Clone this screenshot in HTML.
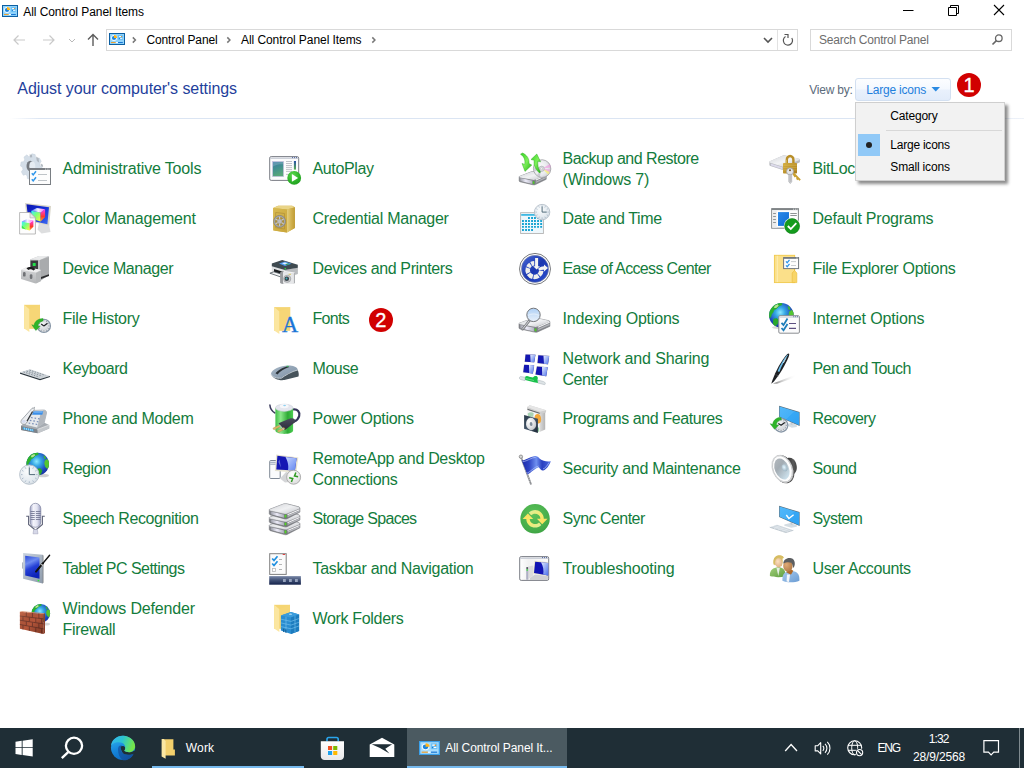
<!DOCTYPE html>
<html><head><meta charset="utf-8"><title>All Control Panel Items</title>
<style>
html,body{margin:0;padding:0}
body{width:1024px;height:768px;overflow:hidden;background:#fff;position:relative;font-family:"Liberation Sans",sans-serif;}
.t{position:absolute;white-space:nowrap;}
.abs{position:absolute}
.it{position:absolute;width:245px;height:50px}
.it .ic{position:absolute;left:2px;top:10px;width:32px;height:32px}
.it .ic svg{display:block;width:32px;height:32px;overflow:visible}
.it .lb{position:absolute;left:45.5px;white-space:nowrap;font-size:16px;line-height:21px;color:#137c3c}
svg{display:block}
</style></head>
<body>
<!-- title bar -->
<div class="abs" style="left:2px;top:5px;width:16px;height:12px"><svg width="16" height="12" viewBox="0 0 16 12"><rect x="0.500" y="0.500" width="15" height="11" fill="#8fd3fb" stroke="#0d5fa2" stroke-width="1"/><rect x="9" y="2" width="5" height="5" fill="#6cc0f5"/><circle cx="5" cy="5" r="2.900" fill="#f4fbff"/><circle cx="5" cy="5" r="2.100" fill="#1a84de"/><path d="M5 5V1.900A3.100 3.100 0 0 1 8.100 5z" fill="#ffb41a"/><rect x="10" y="3.100" width="2.500" height=".9" rx=".4" fill="#fff"/><circle cx="12.500" cy="3.550" r=".65" fill="#f5901e"/><circle cx="10.400" cy="5.600" r=".6" fill="#1a78d0"/><rect x="11" y="5.150" width="2.400" height=".9" rx=".4" fill="#fff"/><rect x="2" y="9.100" width="4.800" height=".95" fill="#f59a1a"/><rect x="6.800" y="9.100" width="2.200" height=".95" fill="#fff"/><rect x="9" y="9.100" width="4.800" height=".95" fill="#0f6ed0"/></svg></div>
<div class="t" style="left:23.2px;top:4.94px;font-size:12px;line-height:15px;letter-spacing:-0.055px;color:#000;">All Control Panel Items</div>
<svg class="abs" style="left:896px;top:0" width="128" height="22" viewBox="0 0 128 22">
 <path d="M7 10.5h10.5" stroke="#000" stroke-width="1" fill="none"/>
 <path d="M52.5 7.5h8v8h-8z M54.5 7.5v-2h8v8h-2" stroke="#000" stroke-width="1" fill="none"/>
 <path d="M98 5l10 10M108 5l-10 10" stroke="#000" stroke-width="1.1" fill="none"/>
</svg>
<!-- nav bar -->
<svg class="abs" style="left:0;top:28px" width="106" height="24" viewBox="0 0 106 24">
 <g fill="none" stroke="#c9c9c9" stroke-width="1.2">
  <path d="M25 12H14M18.5 7.5L14 12l4.500 4.500"/>
  <path d="M43 12h11M49.500 7.500L54 12l-4.500 4.500"/>
  <path d="M69 11l3 3 3-3" stroke="#b9b9b9" stroke-width="1"/>
 </g>
 <path d="M93 18V6.500M88 11.500l5-5 5 5" fill="none" stroke="#5c5c5c" stroke-width="1.4"/>
</svg>
<div class="abs" style="left:106px;top:29px;width:690px;height:20px;border:1px solid #d9d9d9;background:#fff"></div>
<div class="abs" style="left:777px;top:30px;width:1px;height:20px;background:#e2e2e2"></div>
<div class="abs" style="left:109px;top:33px;width:16px;height:12px"><svg width="16" height="12" viewBox="0 0 16 12"><rect x="0.500" y="0.500" width="15" height="11" fill="#8fd3fb" stroke="#0d5fa2" stroke-width="1"/><rect x="9" y="2" width="5" height="5" fill="#6cc0f5"/><circle cx="5" cy="5" r="2.900" fill="#f4fbff"/><circle cx="5" cy="5" r="2.100" fill="#1a84de"/><path d="M5 5V1.900A3.100 3.100 0 0 1 8.100 5z" fill="#ffb41a"/><rect x="10" y="3.100" width="2.500" height=".9" rx=".4" fill="#fff"/><circle cx="12.500" cy="3.550" r=".65" fill="#f5901e"/><circle cx="10.400" cy="5.600" r=".6" fill="#1a78d0"/><rect x="11" y="5.150" width="2.400" height=".9" rx=".4" fill="#fff"/><rect x="2" y="9.100" width="4.800" height=".95" fill="#f59a1a"/><rect x="6.800" y="9.100" width="2.200" height=".95" fill="#fff"/><rect x="9" y="9.100" width="4.800" height=".95" fill="#0f6ed0"/></svg></div>
<svg class="abs" style="left:130px;top:35px" width="250" height="10" viewBox="0 0 250 10">
 <g fill="none" stroke="#777" stroke-width="1.500"><path d="M2.800 2.400l2.600 2.600-2.600 2.600"/><path d="M97.300 2.400l2.600 2.600-2.600 2.600"/><path d="M242.300 2.400l2.600 2.600-2.600 2.600"/></g>
</svg>
<div class="t" style="left:146.5px;top:33.34px;font-size:12px;line-height:15px;letter-spacing:-0.132px;color:#000;">Control Panel</div>
<div class="t" style="left:241.0px;top:33.34px;font-size:12px;line-height:15px;letter-spacing:-0.068px;color:#000;">All Control Panel Items</div>
<svg class="abs" style="left:760px;top:32px" width="36" height="16" viewBox="0 0 36 16">
 <path d="M4 6l4 4 4-4" fill="none" stroke="#555" stroke-width="1.6"/>
 <path d="M25.500 4.600A4.600 4.600 0 1 0 31.800 6" fill="none" stroke="#555" stroke-width="1.2"/>
 <path d="M24.500 2.500h3.500v3.500" fill="none" stroke="#555" stroke-width="1.2"/>
</svg>
<div class="abs" style="left:810px;top:29px;width:200px;height:20px;border:1px solid #d9d9d9;background:#fff"></div>
<div class="t" style="left:819.0px;top:33.34px;font-size:12px;line-height:15px;letter-spacing:-0.224px;color:#6d6d6d;">Search Control Panel</div>
<svg class="abs" style="left:990px;top:33px" width="16" height="14" viewBox="0 0 16 14">
 <circle cx="8.800" cy="5.200" r="3.300" fill="none" stroke="#666" stroke-width="1.3"/><path d="M6.400 7.600L2.500 11.500" stroke="#666" stroke-width="1.600"/>
</svg>
<!-- heading -->
<div class="t" style="left:17.3px;top:79.26px;font-size:16px;line-height:20px;letter-spacing:-0.069px;color:#1f3f9c;">Adjust your computer's settings</div>
<div class="t" style="left:809.3px;top:83.09px;font-size:12px;line-height:15px;letter-spacing:-0.243px;color:#5b6b7b;">View by:</div>
<div class="abs" style="left:855px;top:78px;width:94px;height:20.500px;border:1px solid #d3e0f1;border-radius:3px;background:linear-gradient(#fcfdff 0%,#f4f8fe 48%,#e9f1fc 52%,#e2ecfa 100%)"></div>
<div class="t" style="left:866.3px;top:83.09px;font-size:12px;line-height:15px;letter-spacing:-0.213px;color:#1e7fdc;">Large icons</div>
<svg class="abs" style="left:931px;top:86px" width="10" height="6" viewBox="0 0 10 6"><path d="M0.500 1h8.500L4.750 5.500z" fill="#2a8ae2"/></svg>
<div class="abs" style="left:10px;top:118px;width:1014px;height:1px;background:linear-gradient(90deg,#fff 0,#dbe5f3 3%,#dbe5f3 92%,#eef2f9 100%)"></div>
<!-- red badges -->
<div class="abs badge" style="left:957px;top:72.800px;">1</div>
<div class="abs badge" style="left:368.800px;top:307.800px;">2</div>
<style>.badge{width:24px;height:24px;border-radius:50%;background:#d10000;color:#fff;font-size:20px;line-height:24.500px;text-align:center;-webkit-text-stroke:.35px #fff}</style>
<!-- items -->
<div class="it" style="left:17px;top:143px"><div class="ic"><svg viewBox="0 0 32 32"><g transform="translate(12.3 13.6) scale(0.86 1.02) rotate(12)"><path d="M9.79 -2.85L12.44 -1.97L12.44 1.97L9.79 2.85L8.94 4.91L10.19 7.41L7.41 10.19L4.91 8.94L2.85 9.79L1.97 12.44L-1.97 12.44L-2.85 9.79L-4.91 8.94L-7.41 10.19L-10.19 7.41L-8.94 4.91L-9.79 2.85L-12.44 1.97L-12.44 -1.97L-9.79 -2.85L-8.94 -4.91L-10.19 -7.41L-7.41 -10.19L-4.91 -8.94L-2.85 -9.79L-1.97 -12.44L1.97 -12.44L2.85 -9.79L4.91 -8.94L7.41 -10.19L10.19 -7.41L8.94 -4.91z" fill="#d4dee8" stroke="#c3cfdb" stroke-width=".5" stroke-linejoin="round"/></g><path d="M10.500 1.400l2.400.3.300 2.500-2 .4zM17 3.500l2.600 1.500.5 4.400-2.200-1.500zM21.700 10.500l2.200 1.200.2 2.200-2.200-.6z" fill="#a9b1ba" opacity=".85"/><ellipse cx="11.300" cy="13" rx="3.800" ry="5.300" fill="#74797f"/><ellipse cx="13.300" cy="13.200" rx="3" ry="4.800" fill="#e6ecf2"/><rect x="10.500" y="15.500" width="21" height="16" fill="#fdfdfd" stroke="#797e83" stroke-width="1"/><rect x="10.500" y="15.300" width="21" height="1.700" fill="#797e83"/><path d="M26 16.100h.9M27.800 16.100h.9M29.500 16.100h.9" stroke="#fff" stroke-width=".8"/><path d="M12.800 20.300l1.400 1.600 2.800-3.600M12.800 26.300l1.400 1.600 2.800-3.600" stroke="#2f96ea" stroke-width="1.500" fill="none"/><path d="M19 21.500h9M19 27.500h9" stroke="#bfc4c8" stroke-width="1"/></svg></div><div class="lb" style="top:15.0px"><span style="letter-spacing:-0.159px">Administrative Tools</span></div></div>
<div class="it" style="left:17px;top:193px"><div class="ic"><svg viewBox="0 0 32 32"><defs><linearGradient id="cmS" x1="0" y1="0" x2="1" y2="1"><stop offset="0" stop-color="#0c16b0"/><stop offset=".5" stop-color="#1430d8"/><stop offset="1" stop-color="#3f6cf0"/></linearGradient><linearGradient id="cm1a" x1="0" y1="0" x2="1" y2="1"><stop offset="0" stop-color="#35f0ff"/><stop offset=".45" stop-color="#7dff7a"/><stop offset="1" stop-color="#fff83a"/></linearGradient><linearGradient id="cm1b" x1="0" y1="0" x2="0" y2="1"><stop offset="0" stop-color="#ff3cf0"/><stop offset=".6" stop-color="#ff3a2a"/><stop offset="1" stop-color="#ffb02a"/></linearGradient><linearGradient id="cm1t" x1="0" y1="0" x2="1" y2="0"><stop offset="0" stop-color="#4a6cff"/><stop offset=".5" stop-color="#f4f6ff"/><stop offset="1" stop-color="#ff60f0"/></linearGradient><linearGradient id="cm2a" x1="0" y1="0" x2="1" y2="1"><stop offset="0" stop-color="#35f0ff"/><stop offset=".45" stop-color="#7dff7a"/><stop offset="1" stop-color="#fff83a"/></linearGradient><linearGradient id="cm2b" x1="0" y1="0" x2="0" y2="1"><stop offset="0" stop-color="#ff3cf0"/><stop offset=".6" stop-color="#ff3a2a"/><stop offset="1" stop-color="#ffb02a"/></linearGradient><linearGradient id="cm2t" x1="0" y1="0" x2="1" y2="0"><stop offset="0" stop-color="#4a6cff"/><stop offset=".5" stop-color="#f4f6ff"/><stop offset="1" stop-color="#ff60f0"/></linearGradient></defs><path d="M20 20l10 1.500 1.500 7.500-9 1.500-4-4z" fill="#d9dadc" opacity=".9"/><path d="M6 0l26 3-1.800 19.500L8 18z" fill="#d8d5c8"/><path d="M7.500 1.300l22.500 2.900-1.600 17L9.400 17z" fill="url(#cmS)"/><path d="M12.30 7.71L21.61 9.43L21.61 18.40L12.30 15.64z" fill="url(#cm1a)"/><path d="M21.61 9.43L26.10 6.32L26.10 13.91L21.61 18.40z" fill="url(#cm1b)"/><path d="M12.30 7.71L17.82 4.95L26.10 6.32L21.61 9.43z" fill="url(#cm1t)"/><path d="M12.30 12.19L12.30 15.64L17.13 17.02z" fill="#25e23a" opacity=".8"/><path d="M0.600 9.500h10.400l5.400 5.400V31H0.600z" fill="#fdfdfd" stroke="#a9a9a9" stroke-width=".8"/><path d="M11 9.500v5.400h5.400z" fill="#e8e8e8" stroke="#a9a9a9" stroke-width=".6"/><path d="M2.80 18.61L10.63 20.06L10.63 27.60L2.80 25.28z" fill="url(#cm2a)"/><path d="M10.63 20.06L14.40 17.45L14.40 23.83L10.63 27.60z" fill="url(#cm2b)"/><path d="M2.80 18.61L7.44 16.29L14.40 17.45L10.63 20.06z" fill="url(#cm2t)"/><path d="M2.80 22.38L2.80 25.28L6.86 26.44z" fill="#25e23a" opacity=".8"/></svg></div><div class="lb" style="top:15.0px"><span style="letter-spacing:-0.174px">Color Management</span></div></div>
<div class="it" style="left:17px;top:243px"><div class="ic"><svg viewBox="0 0 32 32"><defs><linearGradient id="dmF" x1="0" y1="0" x2="0" y2="1"><stop offset="0" stop-color="#d6d7d9"/><stop offset="1" stop-color="#b4b6b8"/></linearGradient></defs><path d="M11 6.500L20 3h9.500l.5 1V22l-8 5.500H11z" fill="#bfc1c3"/><path d="M11 6.500L20 3h9.500L21 7z" fill="#e9eaeb"/><path d="M21 7l9-3V22l-9 5.500z" fill="#a9abad"/><path d="M11.500 7.500h7.500v10h-7.500z" fill="#3a3b3d"/><rect x="13.700" y="10" width="3" height="3" rx=".6" fill="#20e24a"/><path d="M22 24l8-2.800v1.800l-8 3z" fill="#2d2e30"/><path d="M2 17l5-2.500 8 1 7 1.500V28l-5.500 2.500L2 26z" fill="url(#dmF)"/><path d="M2 17l5-2.500 8 1 7 1.500-5 2.500z" fill="#efeff0"/><path d="M7.500 15.500c2-2 6-2 9 .5l-2 1.500c-2-1.500-4-1.500-5-.5z" fill="#1c1c1e"/><path d="M17 20l5-2.500V28l-5 2.500z" fill="#b5b7b9"/><rect x="4" y="19" width="2.600" height="4.600" rx="1.200" fill="#707276"/><rect x="10.800" y="21.300" width="2.600" height="4.600" rx="1.200" fill="#707276"/></svg></div><div class="lb" style="top:15.0px"><span style="letter-spacing:-0.414px">Device Manager</span></div></div>
<div class="it" style="left:17px;top:293px"><div class="ic"><svg viewBox="0 0 32 32"><defs><radialGradient id="fhk" cx="0.4" cy="0.35" r="0.8"><stop offset="0" stop-color="#f4f5f6"/><stop offset="0.7" stop-color="#cfd3d7"/><stop offset="1" stop-color="#aeb4bb"/></radialGradient></defs><path d="M5.1 1.8H21.0V25.700000000000003H5.1z" fill="#f5d573"/><path d="M5.1 1.8L10.399999999999999 6.3V28.900000000000002L5.1 25.400000000000002z" fill="#fbe6a0"/><path d="M10.399999999999999 6.3V25.700000000000003H21.0V1.8z" fill="#f6d778" opacity=".6"/><circle cx="24.9" cy="22.9" r="6.5" fill="url(#fhk)" stroke="#8796a6" stroke-width="1.3"/><circle cx="24.9" cy="22.9" r="5.4" fill="none" stroke="#e9edf2" stroke-width=".7"/><path d="M29.45 22.90L30.49 22.90M28.84 25.17L29.74 25.69M27.17 26.84L27.70 27.74M24.90 27.45L24.90 28.49M22.62 26.84L22.11 27.74M20.96 25.17L20.06 25.69M20.35 22.90L19.31 22.90M20.96 20.62L20.06 20.11M22.62 18.96L22.10 18.06M24.90 18.35L24.90 17.31M27.17 18.96L27.70 18.06M28.84 20.62L29.74 20.10" stroke="#70767c" stroke-width="0.7"/><path d="M24.9 22.9L22.17 21.08M24.9 22.9L28.47 20.17" stroke="#1e2226" stroke-width="1.2" fill="none"/><path d="M24 15.500c-5 0-8.500 3-9 7l-2.200-.8 4 5.800 4.500-4.200-2.500-.4c.6-2.800 2.800-4.400 5.200-4.900z" fill="#2fb42a" stroke="#1f9a20" stroke-width=".4"/></svg></div><div class="lb" style="top:15.0px"><span style="letter-spacing:-0.243px">File History</span></div></div>
<div class="it" style="left:17px;top:343px"><div class="ic"><svg viewBox="0 0 32 32"><path d="M1.200 19.300L11.100 16.300l19.800 6.600-9.900 3z" fill="#cfd5da"/><path d="M4.500 18.900l15.700 5.200M7.500 18l15.700 5.200M10.500 17.100l15.700 5.200" stroke="#87919a" stroke-width="1" stroke-dasharray="1.500 1.200"/><path d="M1 19.500l20 6.500 10-3.100v1L21 27.200 1 20.700z" fill="#2c363e"/></svg></div><div class="lb" style="top:15.0px"><span style="letter-spacing:-0.425px">Keyboard</span></div></div>
<div class="it" style="left:17px;top:393px"><div class="ic"><svg viewBox="0 0 32 32"><path d="M2 22.500l4-2.500h20l4.200 2v3.500L19 30.200 2 27z" fill="#a7acb2"/><path d="M2 23l16.500 3.400v3.800L2 27z" fill="#7d838a"/><path d="M4 24.300l10.500 2.100v2l-10.500-2.100z" fill="#3fa8e6"/><path d="M5.500 24.600v2M7.500 25v2M9.500 25.400v2M11.500 25.800v2M13.200 26.100v2" stroke="#d9f0ff" stroke-width=".6"/><path d="M18.500 26.400l11.700-4.400v3.500L19 30.200z" fill="#c3c7cb"/><path d="M18.500 26.400l11.700-4.400" stroke="#e9ebed" stroke-width=".7"/><path d="M12 7.500l12.500-.5c2 0 3 1.200 3 3L25 20.500 18 25 6 22z" fill="#e6e9ec" stroke="#9aa0a7" stroke-width=".7"/><path d="M24.500 7c2 0 3 1.200 3 3L25 20.500 18 25l3.500-14z" fill="#b3b8be"/><path d="M14.300 8.300h10l-1 3.400h-10.300z" fill="#3c8fe8"/><path d="M14.800 9.200h8.800" stroke="#8fc4f8" stroke-width=".7"/><path d="M12 14.500l1.600.3M15.500 15l1.600.3M19 15.600l1.600.3M10.800 17.300l1.600.3M14.300 17.900l1.600.3M17.800 18.500l1.600.3M9.600 20l1.600.3M13.100 20.600l1.600.3M16.600 21.200l1.600.3" stroke="#7a8fb8" stroke-width="1.200"/><path d="M13 5.300c1.500-.8 2.800-.3 2.300 1.200L7.500 20c-1 1.600-3.500 2-5 .3-.9-1-.6-2.200 0-3.300z" fill="#eceef1" stroke="#8f959c" stroke-width=".8"/><path d="M13.500 8.500L8 18" stroke="#2a2d30" stroke-width="1.100"/><path d="M14.800 5l1.200-1" stroke="#9aa0a7" stroke-width=".9"/><ellipse cx="4.800" cy="18.500" rx="2" ry="1.400" fill="#d6dcf0"/></svg></div><div class="lb" style="top:15.0px"><span style="letter-spacing:-0.280px">Phone and Modem</span></div></div>
<div class="it" style="left:17px;top:443px"><div class="ic"><svg viewBox="0 0 32 32"><defs><radialGradient id="rgg" cx="0.45" cy="0.38" r="0.68"><stop offset="0" stop-color="#8beaff"/><stop offset="0.3" stop-color="#35a6e4"/><stop offset="0.7" stop-color="#1d49bc"/><stop offset="1" stop-color="#182a96"/></radialGradient><clipPath id="rgc"><circle cx="18.7" cy="11.1" r="11.3"/></clipPath><radialGradient id="rgk" cx="0.4" cy="0.35" r="0.8"><stop offset="0" stop-color="#fafcfd"/><stop offset="0.7" stop-color="#e0e7ed"/><stop offset="1" stop-color="#c2cad3"/></radialGradient></defs><ellipse cx="24" cy="22.500" rx="6" ry="1.800" fill="#000" opacity=".18"/><circle cx="18.7" cy="11.1" r="11.3" fill="url(#rgg)"/><g clip-path="url(#rgc)" stroke-linejoin="round"><path d="M7.40 7.71L9.09 3.75L13.05 0.37L18.70 -0.77L19.27 1.38L16.44 2.51L14.18 4.88L11.92 6.01L11.02 8.27L9.66 9.97L8.76 12.79L7.40 13.36z" fill="#2db32c" stroke="#2db32c" stroke-width=".6"/><path d="M12.48 2.29L15.31 0.93L16.21 2.29L13.95 4.32L11.92 4.32z" fill="#d8efb0" opacity=".8"/><path d="M18.70 16.07L21.64 15.85L22.77 17.77L21.41 21.16L19.60 22.85L18.25 20.03z" fill="#2aa82c" stroke="#2aa82c" stroke-width="1"/><path d="M26.16 7.71L28.30 6.35L30.23 8.84L30.23 13.36L28.30 15.62L26.61 13.93L25.71 10.54z" fill="#55c630" stroke="#55c630" stroke-width=".8"/><path d="M24.35 2.62L26.16 2.96L27.06 5.45L25.48 6.35z" fill="#3fb82e" /></g><circle cx="10.3" cy="21.6" r="9.7" fill="url(#rgk)" stroke="#b4bec8" stroke-width="0.9"/><path d="M17.09 21.60L18.64 21.60M16.18 25.00L17.52 25.77M13.70 27.48L14.47 28.82M10.30 28.39L10.30 29.94M6.91 27.48L6.13 28.82M4.42 25.00L3.08 25.77M3.51 21.60L1.96 21.60M4.42 18.21L3.08 17.43M6.90 15.72L6.13 14.38M10.30 14.81L10.30 13.26M13.70 15.72L14.47 14.38M16.18 18.20L17.52 17.43" stroke="#8fa3b8" stroke-width="0.7"/><path d="M10.3 21.6L10.30 14.62M10.3 21.6L16.12 21.60" stroke="#4a6474" stroke-width="0.95" fill="none"/></svg></div><div class="lb" style="top:15.0px"><span style="letter-spacing:-0.417px">Region</span></div></div>
<div class="it" style="left:17px;top:493px"><div class="ic"><svg viewBox="0 0 32 32"><defs><linearGradient id="spG" x1="0" y1="0" x2="1" y2="0"><stop offset="0" stop-color="#9fa3c4"/><stop offset=".3" stop-color="#f4f4fb"/><stop offset=".65" stop-color="#e3e4f2"/><stop offset="1" stop-color="#9a9ec0"/></linearGradient></defs><path d="M7.200 13.200h2.400v8.300l6.900 5.700 6.900-5.700v-8.300h2.400" fill="none" stroke="#5f6378" stroke-width="1.100"/><path d="M14.700 26.500h3.600l.7 4.300h-5z" fill="#d6d8e8" stroke="#9a9db5" stroke-width=".5"/><rect x="11.100" y="0.300" width="10.700" height="24" rx="5.350" fill="url(#spG)" stroke="#7d819e" stroke-width=".7"/><path d="M11.500 8.500h10M11.500 10.500h10M11.500 12.500h10M11.500 14.500h10M11.500 16.500h10" stroke="#6b6f8c" stroke-width=".8"/><path d="M16.300 8v9" stroke="#e9eaf6" stroke-width="1.200"/></svg></div><div class="lb" style="top:15.0px"><span style="letter-spacing:-0.407px">Speech Recognition</span></div></div>
<div class="it" style="left:17px;top:543px"><div class="ic"><svg viewBox="0 0 32 32"><defs><linearGradient id="tbF" x1="0" y1="0" x2="1" y2="1"><stop offset="0" stop-color="#c9d3df"/><stop offset="1" stop-color="#8e9bab"/></linearGradient><linearGradient id="tbS" x1="0" y1="0" x2="0.300" y2="1"><stop offset="0" stop-color="#2a49d8"/><stop offset=".35" stop-color="#6e8cf0"/><stop offset=".6" stop-color="#2440d6"/><stop offset="1" stop-color="#0d22b8"/></linearGradient></defs><path d="M23.400 1.800l.9.800v27.200l-.9.600z" fill="#2b2f36"/><path d="M3.300 9.500l.8-.3v6.600l-.8-.3z" fill="#8b97a6"/><path d="M4.100 -0.100L23.600 1.800v28.600L4.100 25.700z" fill="url(#tbF)"/><path d="M6.200 2.800l14.300 1.600v21.300L6.200 22.600z" fill="url(#tbS)"/><rect x="18.700" y="26.800" width="1.500" height="1.500" fill="#2aee3a"/><path d="M30.600 2.300L17 18.600" stroke="#111" stroke-width="1.400" stroke-linecap="round"/><path d="M24 10.200L17 18.600" stroke="#111" stroke-width="1.900" stroke-linecap="round"/><path d="M22.300 11.300l1.500 1.200" stroke="#ddd" stroke-width="1.100"/></svg></div><div class="lb" style="top:15.0px"><span style="letter-spacing:-0.540px">Tablet PC Settings</span></div></div>
<div class="it" style="left:17px;top:593px"><div class="ic"><svg viewBox="0 0 32 32"><defs><radialGradient id="fwg" cx="0.45" cy="0.38" r="0.68"><stop offset="0" stop-color="#8beaff"/><stop offset="0.3" stop-color="#35a6e4"/><stop offset="0.7" stop-color="#1d49bc"/><stop offset="1" stop-color="#182a96"/></radialGradient><clipPath id="fwc"><circle cx="21.8" cy="10.4" r="9.3"/></clipPath><linearGradient id="fwSh" x1="0" y1="0" x2="1" y2="1"><stop offset="0" stop-color="#ffb08a" stop-opacity=".25"/><stop offset=".5" stop-color="#000" stop-opacity="0"/><stop offset="1" stop-color="#3a0a00" stop-opacity=".4"/></linearGradient></defs><ellipse cx="26" cy="21" rx="5" ry="1.500" fill="#000" opacity=".15"/><circle cx="21.8" cy="10.4" r="9.3" fill="url(#fwg)"/><g clip-path="url(#fwc)" stroke-linejoin="round"><path d="M12.50 7.61L13.89 4.35L17.15 1.56L21.80 0.63L22.27 2.40L19.94 3.33L18.08 5.28L16.22 6.21L15.48 8.07L14.36 9.47L13.62 11.79L12.50 12.26z" fill="#2db32c" stroke="#2db32c" stroke-width=".6"/><path d="M16.68 3.15L19.01 2.03L19.75 3.15L17.89 4.82L16.22 4.82z" fill="#d8efb0" opacity=".8"/><path d="M21.80 14.49L24.22 14.31L25.15 15.89L24.03 18.68L22.54 20.07L21.43 17.75z" fill="#2aa82c" stroke="#2aa82c" stroke-width="1"/><path d="M27.94 7.61L29.71 6.49L31.29 8.54L31.29 12.26L29.71 14.12L28.31 12.73L27.57 9.94z" fill="#55c630" stroke="#55c630" stroke-width=".8"/><path d="M26.45 3.42L27.94 3.70L28.68 5.75L27.38 6.49z" fill="#3fb82e" /></g><path d="M0.900 8.800L24.600 10.900V30.900L0.900 25.700z" fill="#b5563a"/><path d="M0.900 8.800L3 8.200 26 10.200 24.600 10.900z" fill="#d98a66"/><path d="M24.600 10.900l1.400-.7V30l-1.400.9z" fill="#8c3f2a"/><path d="M0.900 13.03L24.600 15.90M0.900 17.25L24.600 20.90M0.900 21.48L24.600 25.90M7.30 9.37V13.80M13.46 9.91V14.55M19.86 10.48V15.32M3.98 13.40V17.72M10.38 14.18V18.71M16.78 14.95V19.70M22.70 15.67V20.61M7.30 18.24V22.67M13.46 19.18V23.82M19.86 20.17V25.02M3.98 22.05V26.38M10.38 23.24V27.78M16.78 24.44V29.18M22.70 25.55V30.48" stroke="#74392b" stroke-width=".9" fill="none"/><path d="M0.900 8.800L24.600 10.900V30.900L0.900 25.700z" fill="url(#fwSh)"/></svg></div><div class="lb" style="top:4.5px"><span style="letter-spacing:-0.179px">Windows Defender</span><br><span style="letter-spacing:-0.278px">Firewall</span></div></div>
<div class="it" style="left:267px;top:143px"><div class="ic"><svg viewBox="0 0 32 32"><defs><linearGradient id="apP" x1="0" y1="0" x2="0.300" y2="1"><stop offset="0" stop-color="#3b78a8"/><stop offset=".5" stop-color="#42908f"/><stop offset="1" stop-color="#57a77a"/></linearGradient><linearGradient id="apB" x1="0" y1="0" x2="0" y2="1"><stop offset="0" stop-color="#2a50a8"/><stop offset="1" stop-color="#58b050"/></linearGradient><radialGradient id="apC" cx=".4" cy=".3" r=".8"><stop offset="0" stop-color="#5fd850"/><stop offset=".6" stop-color="#2cb228"/><stop offset="1" stop-color="#1f9a1f"/></radialGradient></defs><rect x="0.700" y="3.600" width="29" height="23.800" rx="1.500" fill="#fcfcfd" stroke="#7b7e86" stroke-width="1"/><path d="M1.200 5.200h28" stroke="#c9cdd6" stroke-width="1.400"/><path d="M23 4.600h.9M25 4.600h.9M27 4.600h.9" stroke="#40589a" stroke-width="1"/><rect x="3.600" y="8.600" width="11" height="15" fill="url(#apP)" stroke="#c9c3e0" stroke-width=".7"/><path d="M4 13.500c3-2 7-2.500 10.200-2.300V9H4z" fill="#fff" opacity=".18"/><path d="M17 8.500h6M17 10.500h6M17 12.500h6M17 14.400h6M17 16.400h6M17 18.400h6M17 21.400h3" stroke="#b9bcc2" stroke-width=".9"/><rect x="24.900" y="8" width="2.100" height="8.600" fill="url(#apB)"/><circle cx="25.200" cy="24.900" r="6.900" fill="url(#apC)"/><path d="M22.900 21l6.200 3.900-6.200 3.900z" fill="#fff"/></svg></div><div class="lb" style="top:15.0px"><span style="letter-spacing:-0.356px">AutoPlay</span></div></div>
<div class="it" style="left:267px;top:193px"><div class="ic"><svg viewBox="0 0 32 32"><defs><linearGradient id="crS" x1="0" y1="0" x2="1" y2="0"><stop offset="0" stop-color="#e4cf7e"/><stop offset=".6" stop-color="#cfae4a"/><stop offset="1" stop-color="#bf9b35"/></linearGradient><linearGradient id="crF" x1="0" y1="0" x2="1" y2="1"><stop offset="0" stop-color="#d9bb52"/><stop offset="1" stop-color="#c9a53a"/></linearGradient></defs><path d="M4.100 5l5-2.200h14l2.800 1.500V25l-8 4.500-12.500-2z" fill="#d2b043"/><path d="M4.100 5l5-2.200h14l2.800 1.500-8 2.200z" fill="#e9d487"/><path d="M17.900 6.500l8-2.200V25l-8 4.500z" fill="url(#crS)"/><path d="M4.100 5l13.800 1.500v23L4.100 27.500z" fill="url(#crF)"/><path d="M6.700 9.500l8.800 1v15.500l-8.800-1.300z" fill="none" stroke="#b3923a" stroke-width=".8"/><circle cx="10.600" cy="18.400" r="5.200" fill="none" stroke="#a6a6a6" stroke-width="1.800"/><circle cx="10.600" cy="18.400" r="6" fill="none" stroke="#6f6f6f" stroke-width=".5"/><circle cx="10.600" cy="18.400" r="4.300" fill="#8a7430" opacity=".55"/><path d="M11.90 19.15L14.58 20.70M10.60 19.90L10.60 23.00M9.30 19.15L6.62 20.70M9.30 17.65L6.62 16.10M10.60 16.90L10.60 13.80M11.90 17.65L14.58 16.10" stroke="#c9c9c9" stroke-width="1.200"/><circle cx="10.600" cy="18.400" r="2.300" fill="#bdbdbd" stroke="#8f8f8f" stroke-width=".4"/></svg></div><div class="lb" style="top:15.0px"><span style="letter-spacing:-0.241px">Credential Manager</span></div></div>
<div class="it" style="left:267px;top:243px"><div class="ic"><svg viewBox="0 0 32 32"><path d="M2.800 13l13 4 13-2.400V21l-12 3.300-14-4.300z" fill="#dfe1e3"/><path d="M15.800 17l13-2.400V21l-12 3.300z" fill="#b9bcbf"/><path d="M2.800 10.600L13.200 7l15.600 4.700v3.100l-13 2.200-13-3.800z" fill="#3f4a50"/><path d="M10 10.500l6-2 6.500 2.200-6.500 2.300z" fill="#4f9cf0"/><path d="M13 10.300l3-.8 3 1-3 1z" fill="#e9f3ff"/><path d="M16 11l3.500-.5 1.500.6-3.500 1z" fill="#2f9a4a"/><rect x="15.600" y="14.900" width="1.300" height="1.600" fill="#2fd24a"/><path d="M5 16l9 2.800v3.200l-9-2.800z" fill="#1c1f22"/><path d="M0.900 20.200l4-1.400 9.600 3-3.200 2z" fill="#f4f5f6" stroke="#4c565c" stroke-width=".8"/><path d="M11.100 19.500l2.700-1.500 1.300.5v12l-2 .4-2-1z" fill="#9a9c9f"/><path d="M14 19l10.900 1.800v10.100L14 30.500z" fill="#e6e7e9"/><path d="M14 19l2-1 10 1.600-1.100 1.200z" fill="#f3f3f4"/><path d="M24.900 20.800l1.100-1.200v10.200l-1.100 1.100z" fill="#aeb0b3"/><circle cx="18.200" cy="25.800" r="3.600" fill="#c9cbce" stroke="#8e9194" stroke-width=".6"/><circle cx="17.800" cy="25.800" r="2.300" fill="#3a4248"/><circle cx="17.500" cy="25.500" r="1" fill="#3bb0b8"/><rect x="19.500" y="20.800" width="2.500" height="1" fill="#d8c86a"/></svg></div><div class="lb" style="top:15.0px"><span style="letter-spacing:-0.386px">Devices and Printers</span></div></div>
<div class="it" style="left:267px;top:293px"><div class="ic"><svg viewBox="0 0 32 32"><path d="M5.1 4.1H21.200000000000003V27.7H5.1z" fill="#f5d573"/><path d="M5.1 4.1L10.399999999999999 8.6V30.9L5.1 27.4z" fill="#fbe6a0"/><path d="M10.399999999999999 8.6V27.7H21.200000000000003V4.1z" fill="#f6d778" opacity=".6"/><text x="12.900" y="28.900" font-family="Liberation Serif, serif" font-size="22.500" fill="#1b74d6" stroke="#1b74d6" stroke-width=".35" textLength="16.200" lengthAdjust="spacingAndGlyphs">A</text></svg></div><div class="lb" style="top:15.0px"><span style="letter-spacing:-0.663px">Fonts</span></div></div>
<div class="it" style="left:267px;top:343px"><div class="ic"><svg viewBox="0 0 32 32"><defs><linearGradient id="moT" x1="0" y1="0" x2="1" y2="1"><stop offset="0" stop-color="#a7b6c5"/><stop offset="1" stop-color="#7e92a6"/></linearGradient></defs><path d="M2.300 21.500c2 4.200 7.500 6.300 13 5.600l14.200-3.600c.5-2 .4-4.600-1.200-7z" fill="#46535b"/><path d="M2 20.600C3 16 12 12 21 12.500c4.500.3 7.500 2 7.800 4.300C22 18.500 16 22 12 25 7 25.300 2.500 24 2 20.600z" fill="url(#moT)"/><path d="M2.100 21.300c1.400 2.800 5.500 4.300 10.200 3.900 4-3 10-6.600 16.500-8.300" fill="none" stroke="#cfd8e0" stroke-width=".9"/><path d="M6.500 20.300c2-3 7-5.800 12.500-7.100l1.200.9c-5 1.800-9.400 4.400-11.700 7.400z" fill="#2b3238"/><rect x="17.600" y="12.800" width="1.800" height=".9" fill="#2fd050"/></svg></div><div class="lb" style="top:15.0px"><span style="letter-spacing:-0.446px">Mouse</span></div></div>
<div class="it" style="left:267px;top:393px"><div class="ic"><svg viewBox="0 0 32 32"><defs><linearGradient id="pwB" x1="0" y1="0" x2="1" y2="0"><stop offset="0" stop-color="#3fbf46"/><stop offset=".3" stop-color="#8be88a"/><stop offset=".7" stop-color="#2daa34"/><stop offset="1" stop-color="#4ccc52"/></linearGradient><linearGradient id="pwP" x1="0" y1="0" x2="0" y2="1"><stop offset="0" stop-color="#4a4c5e"/><stop offset="1" stop-color="#2c2d3a"/></linearGradient></defs><path d="M0.800 1.500c.3 4 2 7 5.600 8.700" fill="none" stroke="#3a3a5c" stroke-width="1.500"/><path d="M24 6.500c4.500-.8 7.200 2.500 6.200 6.500-.6 2.500-2.500 4.500-5 5.500" fill="none" stroke="#34345a" stroke-width="2.200"/><path d="M6.400 5h17.700v22.500c0 4.500-17.700 4.500-17.700 0z" fill="url(#pwB)"/><ellipse cx="15.250" cy="4.800" rx="8.850" ry="3.600" fill="#e4e6ee" stroke="#c3c6d2" stroke-width=".5"/><ellipse cx="15.200" cy="3.100" rx="4.400" ry="2.200" fill="#f6f7fa"/><ellipse cx="15.600" cy="2.500" rx="1.400" ry=".7" fill="#8fd0f0"/><path d="M9.500 20.300l11.500-4.700c1.500-.5 3.500-.4 4.600.6l.8 1.500c.2 1-.4 1.800-1.300 2.400l-8.400 6.300c-.8.500-1.800.3-2.300-.5z" fill="url(#pwP)"/><path d="M4.500 24.800l6-2.700 1 1.500-5.700 3c-1.300.5-2.300-1-1.300-1.800z" fill="#d9b868" stroke="#a8894a" stroke-width=".4"/><path d="M9 27.300l6-2.900 1 1.600-5.700 3.100c-1.300.5-2.300-1-1.300-1.800z" fill="#d9b868" stroke="#a8894a" stroke-width=".4"/><path d="M10.500 22l4.500 5" stroke="#b9bed0" stroke-width="1"/></svg></div><div class="lb" style="top:15.0px"><span style="letter-spacing:-0.295px">Power Options</span></div></div>
<div class="it" style="left:267px;top:443px"><div class="ic"><svg viewBox="0 0 32 32"><defs><linearGradient id="raL" x1="0" y1="0" x2="1" y2="1"><stop offset="0" stop-color="#c9d8ff"/><stop offset="1" stop-color="#5f84f0"/></linearGradient><radialGradient id="raC" cx=".4" cy=".3" r=".8"><stop offset="0" stop-color="#ffffff"/><stop offset="1" stop-color="#d9d9d9"/></radialGradient></defs><rect x="0.700" y="7.500" width="10.500" height="18" rx="1" fill="#fafbfc" stroke="#7f8996" stroke-width="1"/><path d="M1.200 9.300h9.500M1.200 11.200h9.500" stroke="#7f8fa8" stroke-width=".8"/><path d="M11 25.600l6-6.600 6 1.500 2 8-9 1z" fill="#d4d5d7"/><path d="M7.200 1.500l22.100 2.900-2 15.100L5.900 17.900z" fill="#e6e2cf"/><path d="M8.400 2.800l19.200 2.500-1.700 12.300L7.300 16.600z" fill="#1518b4"/><path d="M16.500 3.900l11.100 1.400-1.700 12.300-6.900-.5c1-4.500-.5-9.500-2.500-13.200z" fill="url(#raL)"/><path d="M9.300 9l1.200-2.500 1.500 8z" fill="#8ea0e8" opacity=".6"/><circle cx="24.600" cy="24.200" r="7" fill="url(#raC)" stroke="#a7a7a7" stroke-width=".9"/><g transform="rotate(-28 24.600 24.200)"><path d="M20.400 22.600l2.800 2.400-2.800 2.400M28.800 21.200l-2.800 2.300 2.800 2.300" fill="none" stroke="#2f9a22" stroke-width="1.500"/></g></svg></div><div class="lb" style="top:4.5px"><span style="letter-spacing:-0.318px">RemoteApp and Desktop</span><br><span style="letter-spacing:-0.368px">Connections</span></div></div>
<div class="it" style="left:267px;top:493px"><div class="ic"><svg viewBox="0 0 32 32"><defs><linearGradient id="stF" x1="0" y1="0" x2="1" y2="0"><stop offset="0" stop-color="#9c9ea8"/><stop offset=".45" stop-color="#ecebf8"/><stop offset="1" stop-color="#a8a9b6"/></linearGradient><linearGradient id="stT" x1="0" y1="0" x2="1" y2="1"><stop offset="0" stop-color="#d2d4d8"/><stop offset=".5" stop-color="#eff0f2"/><stop offset="1" stop-color="#c3c5ca"/></linearGradient></defs><path d="M0.300 22.3L14 17.0c1.500-.6 3-.6 4.500-.2L29.500 19.5c1.500.5 1.500 1.500 1.400 2.500v2.800L18 31.5c-.8.300-1.600.3-2.400.1L1.500 27.7c-1-.4-1.300-1.200-1.200-2z" fill="#7d7f84" stroke="#6f7176" stroke-width=".6"/><path d="M0.600 22.0L14 16.8c1.500-.6 3-.6 4.500-.2L30 19.7c1 .5 .8 1.500 0 2L18 26.5c-.8.300-1.600.3-2.400.1L1.200 23.5c-.9-.3-1.200-1.100-.6-1.500z" fill="url(#stT)" stroke="#9c9ea3" stroke-width=".4"/><path d="M1.800 24.2l13.600 3.200v3l-13.600-3.400z" fill="url(#stF)"/><path d="M18.500 27.5L30.600 22.4" stroke="#f4f4f6" stroke-width="1.100"/><path d="M18.600 29.1L30.500 23.9" stroke="#b9bbc0" stroke-width="1.200"/><rect x="15.400" y="27.2" width="2.200" height="3.200" rx=".5" fill="#54d81e" stroke="#6a4a9a" stroke-width=".3"/><path d="M0.300 14.5L14 9.2c1.500-.6 3-.6 4.500-.2L29.500 11.7c1.500.5 1.500 1.500 1.400 2.500v2.800L18 23.7c-.8.300-1.600.3-2.400.1L1.500 19.9c-1-.4-1.300-1.200-1.200-2z" fill="#7d7f84" stroke="#6f7176" stroke-width=".6"/><path d="M0.600 14.2L14 9.0c1.500-.6 3-.6 4.500-.2L30 11.9c1 .5 .8 1.500 0 2L18 18.7c-.8.300-1.600.3-2.400.1L1.200 15.7c-.9-.3-1.200-1.100-.6-1.500z" fill="url(#stT)" stroke="#9c9ea3" stroke-width=".4"/><path d="M1.800 16.4l13.600 3.200v3l-13.600-3.400z" fill="url(#stF)"/><path d="M18.500 19.7L30.600 14.600000000000001" stroke="#f4f4f6" stroke-width="1.100"/><path d="M18.600 21.3L30.500 16.1" stroke="#b9bbc0" stroke-width="1.200"/><rect x="15.400" y="19.4" width="2.200" height="3.200" rx=".5" fill="#54d81e" stroke="#6a4a9a" stroke-width=".3"/><path d="M0.300 6.6L14 1.3c1.500-.6 3-.6 4.500-.2L29.500 3.8c1.500.5 1.500 1.500 1.400 2.500v2.800L18 15.8c-.8.300-1.600.3-2.400.1L1.500 12.0c-1-.4-1.300-1.200-1.200-2z" fill="#7d7f84" stroke="#6f7176" stroke-width=".6"/><path d="M0.600 6.3L14 1.1c1.500-.6 3-.6 4.500-.2L30 4.0c1 .5 .8 1.500 0 2L18 10.8c-.8.300-1.600.3-2.400.1L1.200 7.8c-.9-.3-1.200-1.100-.6-1.500z" fill="url(#stT)" stroke="#9c9ea3" stroke-width=".4"/><path d="M1.800 8.5l13.600 3.200v3l-13.600-3.400z" fill="url(#stF)"/><path d="M18.500 11.8L30.600 6.7" stroke="#f4f4f6" stroke-width="1.100"/><path d="M18.600 13.4L30.500 8.200000000000001" stroke="#b9bbc0" stroke-width="1.200"/><rect x="15.400" y="11.5" width="2.200" height="3.200" rx=".5" fill="#54d81e" stroke="#6a4a9a" stroke-width=".3"/></svg></div><div class="lb" style="top:15.0px"><span style="letter-spacing:-0.711px">Storage Spaces</span></div></div>
<div class="it" style="left:267px;top:543px"><div class="ic"><svg viewBox="0 0 32 32"><defs><linearGradient id="tnB" x1="0" y1="0" x2="0" y2="1"><stop offset="0" stop-color="#7a89a8"/><stop offset=".5" stop-color="#3f4f74"/><stop offset="1" stop-color="#14224a"/></linearGradient></defs><rect x="0.700" y="0.700" width="16.500" height="20.700" fill="#fbfbfb" stroke="#808080" stroke-width="1"/><rect x="13.700" y="1" width="2.400" height="1" fill="#e04343"/><path d="M3.200 5.500l1.800 2 3.500-4.200M3.200 10.500l1.800 2 3.500-4.200" fill="none" stroke="#1e8fe0" stroke-width="1.700"/><rect x="3.500" y="15.500" width="3" height="3" fill="#fff" stroke="#b9b9b9" stroke-width=".8"/><path d="M10 6.500h3M10 11.500h3M10 16.500h3" stroke="#b5b5b5" stroke-width="1"/><rect x="0.200" y="23.100" width="31.700" height="8.600" fill="url(#tnB)"/><path d="M14 26h2.800v2.900H14zM20 26h2.800v2.900H20zM26 26h2.800v2.900H26z" fill="#95a2bd"/></svg></div><div class="lb" style="top:15.0px"><span style="letter-spacing:-0.287px">Taskbar and Navigation</span></div></div>
<div class="it" style="left:267px;top:593px"><div class="ic"><svg viewBox="0 0 32 32"><path d="M5.1 1.8H21.0V25.700000000000003H5.1z" fill="#f5d573"/><path d="M5.1 1.8L10.399999999999999 6.3V28.900000000000002L5.1 25.400000000000002z" fill="#fbe6a0"/><path d="M10.399999999999999 6.3V25.700000000000003H21.0V1.8z" fill="#f6d778" opacity=".6"/><path d="M11.900 12.500l10.100-3.400 8.100 2.400v16.500l-8.100 2.900-10.100-3.500z" fill="#2a8dd0"/><path d="M11.900 12.500l10.100-3.400 8.100 2.400-8.100 3z" fill="#3a9cdc"/><path d="M22 14.500l8.100-3v16.500l-8.100 2.900z" fill="#1c7cbf"/><path d="M11.900 16.20L22 18.40L30.100 15.50M11.900 19.90L22 22.10L30.100 19.20M11.900 23.60L22 25.80L30.100 22.90M17 13.700V29.500M26 13V29.500" stroke="#7cc6f0" stroke-width=".7" fill="none" opacity=".85"/><path d="M14 25.500l1.300.4v3.300l-1.300-.4zM16.200 26.200l1.300.4v3.300l-1.300-.4z" fill="#12629c"/><ellipse cx="21.500" cy="11.200" rx="1.500" ry=".6" fill="#b9e0f6"/></svg></div><div class="lb" style="top:15.0px"><span style="letter-spacing:-0.329px">Work Folders</span></div></div>
<div class="it" style="left:517px;top:143px"><div class="ic"><svg viewBox="0 0 32 32"><defs><linearGradient id="bkT" x1="0" y1="0" x2="1" y2="1"><stop offset="0" stop-color="#cfd1d5"/><stop offset=".5" stop-color="#f1f2f4"/><stop offset="1" stop-color="#bfc1c6"/></linearGradient><linearGradient id="bkF" x1="0" y1="0" x2="1" y2="0"><stop offset="0" stop-color="#a3a5ae"/><stop offset=".45" stop-color="#ecebf8"/><stop offset="1" stop-color="#b0b1be"/></linearGradient><radialGradient id="bkCD" cx=".4" cy=".4" r=".7"><stop offset="0" stop-color="#ffffff"/><stop offset=".6" stop-color="#e9eaee"/><stop offset="1" stop-color="#c7c9cf"/></radialGradient><linearGradient id="bkG" x1="0" y1="0" x2="1" y2="1"><stop offset="0" stop-color="#35d222"/><stop offset=".5" stop-color="#7df05a"/><stop offset="1" stop-color="#22b014"/></linearGradient></defs><path d="M0.20 23.57L12.35 18.81Q13.70 18.40 15.32 18.67L26.39 21.12Q27.20 21.53 27.20 22.48L27.20 26.29L16.40 31.59Q15.32 32.00 13.70 31.73L1.01 28.74Q0.20 28.46 0.20 27.65z" fill="#85878c" stroke="#75777c" stroke-width=".6"/><path d="M0.47 23.30L12.35 18.81Q13.70 18.40 15.32 18.67L26.39 21.12Q27.20 21.66 26.39 22.21L16.40 26.56Q15.05 27.10 13.70 26.83L1.01 24.38Q-0.07 23.98 0.47 23.30z" fill="url(#bkT)"/><path d="M1.28 25.06L13.70 27.65L13.70 31.05L1.28 28.06z" fill="url(#bkF)"/><path d="M16.94 27.10L26.93 22.62" stroke="#f3f3f5" stroke-width="1.100"/><path d="M16.94 29.28L26.93 24.52" stroke="#b4b6bb" stroke-width="1.300"/><path d="M13.70 27.92L15.59 28.33L15.59 31.32L13.70 30.91z" fill="#4fd41c" stroke="#6a4a9a" stroke-width=".3"/><ellipse cx="23.100" cy="15.600" rx="8.700" ry="8.900" fill="url(#bkCD)" stroke="#8f9094" stroke-width=".6" transform="rotate(-20 23.1 15.6)"/><path d="M23.100 15.600L31 11l.7 3.500zM23.100 15.600l8.300 1-1.400 3.200z" fill="#f08adf" opacity=".55"/><path d="M23.100 15.600l7.600 3.500-1.600 2.400z" fill="#f4f07a" opacity=".8"/><path d="M23.100 15.600l-8-1 .3 4zM23.100 15.600l-5 6.500 2.500 1.500z" fill="#a9a9b4" opacity=".5"/><circle cx="22.600" cy="15.800" r="2.700" fill="#d9dbe0" stroke="#9a9ca2" stroke-width=".5"/><circle cx="22.600" cy="15.800" r="1" fill="#fff" stroke="#888" stroke-width=".3"/><path d="M3.500 0c4.500 2 7 6 6.500 10.500l2.800 1.600-6.800 6.300-3-8 2.700 1c.8-4-.5-8-4.200-10.200z" fill="url(#bkG)" stroke="#1fa012" stroke-width=".4"/><path d="M17.800 1L12 6.500l3.200.8c-.6 4 .3 8 5.300 12.700l1-1c-2.500-4-3-7.500-2.600-10.800l2.700.6z" fill="url(#bkG)" stroke="#1fa012" stroke-width=".4"/></svg></div><div class="lb" style="top:4.5px"><span style="letter-spacing:-0.488px">Backup and Restore</span><br><span style="letter-spacing:-0.201px">(Windows 7)</span></div></div>
<div class="it" style="left:517px;top:193px"><div class="ic"><svg viewBox="0 0 32 32"><defs><radialGradient id="dtk" cx="0.4" cy="0.35" r="0.8"><stop offset="0" stop-color="#fafcfd"/><stop offset="0.7" stop-color="#e0e7ed"/><stop offset="1" stop-color="#c2cad3"/></radialGradient></defs><rect x="1.600" y="9.700" width="22.800" height="20.800" fill="#eef7fc" stroke="#b4b4b4" stroke-width=".9"/><rect x="2.200" y="11" width="21.600" height="1.800" fill="#3fb9e3"/><path d="M9 14h1.900v1.900h-1.900zM12.1 14h1.900v1.900h-1.900zM15 14h1.900v1.900h-1.900zM18.1 14h1.900v1.900h-1.900zM21.2 14h1.900v1.900h-1.900zM3 17.1h1.900v1.900h-1.900zM6.1 17.1h1.900v1.900h-1.900zM9 17.1h1.900v1.900h-1.900zM12.1 17.1h1.900v1.900h-1.900zM15 17.1h1.900v1.900h-1.900zM18.1 17.1h1.900v1.900h-1.900zM21.2 17.1h1.900v1.900h-1.900zM3 20h1.900v1.900h-1.900zM6.1 20h1.900v1.900h-1.900zM9 20h1.900v1.900h-1.900zM12.1 20h1.900v1.900h-1.900zM15 20h1.900v1.900h-1.900zM18.1 20h1.900v1.900h-1.900zM21.2 20h1.900v1.900h-1.900zM3 22.9h1.900v1.900h-1.900zM6.1 22.9h1.900v1.900h-1.900zM9 22.9h1.900v1.900h-1.900zM12.1 22.9h1.900v1.900h-1.900zM15 22.9h1.900v1.900h-1.900zM18.1 22.9h1.900v1.900h-1.900zM21.2 22.9h1.900v1.900h-1.900zM3 26h1.900v1.900h-1.900zM6.1 26h1.900v1.900h-1.900zM9 26h1.900v1.900h-1.900zM12.1 26h1.900v1.900h-1.900z" fill="#17a3d2"/><circle cx="23.1" cy="9.1" r="7.7" fill="url(#dtk)" stroke="#b4bec8" stroke-width="0.9"/><path d="M28.49 9.10L29.72 9.10M27.77 11.79L28.83 12.41M25.80 13.77L26.41 14.83M23.10 14.49L23.10 15.72M20.41 13.77L19.79 14.83M18.43 11.79L17.37 12.41M17.71 9.10L16.48 9.10M18.43 6.41L17.37 5.79M20.41 4.43L19.79 3.37M23.10 3.71L23.10 2.48M25.80 4.43L26.41 3.37M27.77 6.40L28.83 5.79" stroke="#8fa3b8" stroke-width="0.7"/><path d="M23.1 9.1L23.10 3.56M23.1 9.1L27.72 9.10" stroke="#4a6474" stroke-width="0.95" fill="none"/></svg></div><div class="lb" style="top:15.0px"><span style="letter-spacing:-0.374px">Date and Time</span></div></div>
<div class="it" style="left:517px;top:243px"><div class="ic"><svg viewBox="0 0 32 32"><defs><linearGradient id="eaB" x1="0" y1="0" x2="1" y2="1"><stop offset="0" stop-color="#4a6ad8"/><stop offset=".5" stop-color="#1c38b0"/><stop offset="1" stop-color="#2a50d0"/></linearGradient></defs><circle cx="16" cy="15.900" r="15.500" fill="#fff" stroke="#55585c" stroke-width=".8"/><circle cx="16" cy="15.900" r="13.600" fill="url(#eaB)" stroke="#8a8f9a" stroke-width=".5"/><path d="M24.57 17.89A9.1 9.1 0 0 1 21.59 23.86L18.58 20.52A4.6 4.6 0 0 0 20.08 17.50zM20.72 24.55A9.1 9.1 0 0 1 14.23 26.11L14.86 21.66A4.6 4.6 0 0 0 18.14 20.87zM13.14 25.89A9.1 9.1 0 0 1 7.78 21.92L11.60 19.54A4.6 4.6 0 0 0 14.31 21.54zM7.25 20.95A9.1 9.1 0 0 1 6.85 14.29L11.13 15.68A4.6 4.6 0 0 0 11.33 19.04zM7.25 13.25A9.1 9.1 0 0 1 10.28 9.65L12.86 13.33A4.6 4.6 0 0 0 11.33 15.16zM11.23 9.07A9.1 9.1 0 0 1 15.18 8.01L15.34 12.50A4.6 4.6 0 0 0 13.34 13.04z" fill="#efefec"/><path d="M16.100 4.900h3v8.300h1.900l-3.400 3.400-3.400-3.400h1.900z" fill="#f4f4f2"/><path d="M19.200 15.500c2-1.500 4-2.200 5.800-2.300v-1.700l4 3.500-4 3.500v-1.800c-1.800-.1-3.500.2-5 .8z" fill="#f4f4f2"/></svg></div><div class="lb" style="top:15.0px"><span style="letter-spacing:-0.650px">Ease of Access Center</span></div></div>
<div class="it" style="left:517px;top:293px"><div class="ic"><svg viewBox="0 0 32 32"><defs><linearGradient id="ixT" x1="0" y1="0" x2="1" y2="1"><stop offset="0" stop-color="#cfd1d5"/><stop offset=".5" stop-color="#f1f2f4"/><stop offset="1" stop-color="#bfc1c6"/></linearGradient><linearGradient id="ixF" x1="0" y1="0" x2="1" y2="0"><stop offset="0" stop-color="#a3a5ae"/><stop offset=".45" stop-color="#ecebf8"/><stop offset="1" stop-color="#b0b1be"/></linearGradient><linearGradient id="ixL" x1="0" y1="0" x2="0" y2="1"><stop offset="0" stop-color="#aed0f6"/><stop offset=".6" stop-color="#d2e4f8"/><stop offset="1" stop-color="#e9f1fb"/></linearGradient></defs><path d="M0.00 20.35L13.90 15.24Q15.45 14.80 17.30 15.09L29.97 17.72Q30.90 18.16 30.90 19.18L30.90 23.27L18.54 28.96Q17.30 29.40 15.45 29.11L0.93 25.90Q0.00 25.60 0.00 24.73z" fill="#85878c" stroke="#75777c" stroke-width=".6"/><path d="M0.31 20.06L13.90 15.24Q15.45 14.80 17.30 15.09L29.97 17.72Q30.90 18.30 29.97 18.89L18.54 23.56Q17.00 24.14 15.45 23.85L0.93 21.22Q-0.31 20.79 0.31 20.06z" fill="url(#ixT)"/><path d="M1.24 21.95L15.45 24.73L15.45 28.38L1.24 25.17z" fill="url(#ixF)"/><path d="M19.16 24.14L30.59 19.33" stroke="#f3f3f5" stroke-width="1.100"/><path d="M19.16 26.48L30.59 21.37" stroke="#b4b6bb" stroke-width="1.300"/><path d="M15.45 25.02L17.61 25.46L17.61 28.67L15.45 28.23z" fill="#4fd41c" stroke="#6a4a9a" stroke-width=".3"/><path d="M10.500 17.500L3.500 26.200" stroke="#7b7d82" stroke-width="2.600" stroke-linecap="round"/><path d="M10.300 17.700L3.600 26" stroke="#d9dadd" stroke-width="1" stroke-linecap="round"/><circle cx="14.500" cy="11.900" r="6.700" fill="url(#ixL)" stroke="#74767a" stroke-width="1"/><path d="M9 12.500c3-2 8-2 11 0" stroke="#fff" stroke-width="1" fill="none" opacity=".5"/></svg></div><div class="lb" style="top:15.0px"><span style="letter-spacing:-0.199px">Indexing Options</span></div></div>
<div class="it" style="left:517px;top:343px"><div class="ic"><svg viewBox="0 0 32 32"><defs><linearGradient id="nwL" x1="0" y1="0" x2="1" y2="1"><stop offset="0" stop-color="#e9efff"/><stop offset="1" stop-color="#4a70ea"/></linearGradient></defs><path d="M6.20 1.25L16.80 1.50L15.50 9.60L5.40 9.10z" fill="#e9e4cf"/><path d="M6.53 1.58L16.39 1.81L15.18 9.26L5.79 8.80z" fill="#1417b2"/><path d="M11.27 1.69L16.39 1.81L15.18 9.26L11.61 9.09z" fill="url(#nwL)"/><path d="M18.90 1.80L30.60 2.55L29.30 11.70L18.10 10.40z" fill="#e9e4cf"/><path d="M19.27 2.19L30.15 2.88L28.94 11.29L18.53 10.10z" fill="#1417b2"/><path d="M24.50 2.52L30.15 2.88L28.94 11.29L24.99 10.84z" fill="url(#nwL)"/><path d="M4.85 11.40L15.50 11.90L14.20 20.80L3.80 19.50z" fill="#e9e4cf"/><path d="M5.18 11.76L15.09 12.22L13.88 20.41L4.21 19.21z" fill="#1417b2"/><path d="M9.94 11.98L15.09 12.22L13.88 20.41L10.20 19.95z" fill="url(#nwL)"/><path d="M17.60 13.00L29.10 14.00L27.50 23.60L16.05 21.80z" fill="#e9e4cf"/><path d="M17.95 13.41L28.64 14.33L27.15 23.16L16.51 21.50z" fill="#1417b2"/><path d="M23.08 13.85L28.64 14.33L27.15 23.16L23.11 22.53z" fill="url(#nwL)"/><path d="M1.500 23.500c-1.500.5-1.500 2.500 0 3l4.500 1.200v-3.500z" fill="#dde3e6" stroke="#a9b3b8" stroke-width=".5"/><path d="M18.900 27l5.500 1.500c2 .6 2.600 2.500 1.300 3.200l-7-1.700z" fill="#dde3e6" stroke="#a9b3b8" stroke-width=".5"/><path d="M6.200 23.700c1-.9 2.500-.8 4 0l3.800.9c.6-1.300 2-2 3.500-1.500 1.500.6 1.600 2.400 1 3.700l.4 3.300-4-.8-8.700-2.300z" fill="#17c04a"/><path d="M7 25.500l8 2" stroke="#6fe08a" stroke-width=".8"/></svg></div><div class="lb" style="top:4.5px"><span style="letter-spacing:-0.133px">Network and Sharing</span><br><span style="letter-spacing:-0.455px">Center</span></div></div>
<div class="it" style="left:517px;top:393px"><div class="ic"><svg viewBox="0 0 32 32"><defs><linearGradient id="pgS" x1="0" y1="0" x2="1" y2="0"><stop offset="0" stop-color="#dedede"/><stop offset="1" stop-color="#b4b4b4"/></linearGradient><linearGradient id="pgC" x1="0" y1="0" x2="1" y2="1"><stop offset="0" stop-color="#2a3a48"/><stop offset=".5" stop-color="#44566a"/><stop offset="1" stop-color="#1a2632"/></linearGradient><radialGradient id="pgD" cx=".35" cy=".3" r=".8"><stop offset="0" stop-color="#ffffff"/><stop offset=".6" stop-color="#dfe1e4"/><stop offset="1" stop-color="#b9bcc0"/></radialGradient></defs><path d="M8.200 5.500l12.500 4 5.500-1.500v18.500l-5.700 2.400L8.200 25z" fill="#f6f6f6"/><path d="M20.700 9.500l5.500-1.500v18.500l-5.700 2.400z" fill="url(#pgS)"/><path d="M8.200 4l2.500-1.800 16.500 5-.3 2.300-6.200 1.700L8.200 7z" fill="#cfcfcf"/><path d="M8.200 4l2.500-1.800 16.500 5-6.500 1.500z" fill="#e6e6e6"/><path d="M8.500 6.300l12.200 4" stroke="#55585a" stroke-width=".9"/><path d="M8.700 10.500c2-1.500 4.500-1.500 6-.3l-.5 3.500-5 .3z" fill="#a9d3b4"/><ellipse cx="18.900" cy="15.800" rx="3.200" ry="4.800" fill="#f2a73a" transform="rotate(-8 18.900 15.800)"/><path d="M18.500 24l1.200.8v4l-1.200-.3z" fill="#6cc080"/><path d="M5.100 11.900l13.800 3.900v14.100L5.100 25.700z" fill="url(#pgC)"/><ellipse cx="12.100" cy="21" rx="5.100" ry="6.200" fill="url(#pgD)" transform="rotate(-8 12.100 21)"/><ellipse cx="12.100" cy="21.100" rx="1.400" ry="2" fill="#7f8c99" transform="rotate(-8 12.100 21.100)"/></svg></div><div class="lb" style="top:15.0px"><span style="letter-spacing:-0.389px">Programs and Features</span></div></div>
<div class="it" style="left:517px;top:443px"><div class="ic"><svg viewBox="0 0 32 32"><defs><linearGradient id="scF" x1="0" y1="0" x2="1" y2="0"><stop offset="0" stop-color="#1c2aa8"/><stop offset=".25" stop-color="#2e44c4"/><stop offset=".5" stop-color="#6f90f0"/><stop offset=".7" stop-color="#2a40c0"/><stop offset="1" stop-color="#4a68e0"/></linearGradient></defs><path d="M2.200 4.800l9.600 26" stroke="#86888c" stroke-width="1.800" stroke-linecap="round"/><path d="M2.400 5.500l9.200 25" stroke="#f3f3f3" stroke-width=".7" stroke-dasharray="1.200 1.200"/><circle cx="1.900" cy="3.700" r="1.700" fill="#d5d5d5" stroke="#777" stroke-width=".7"/><path d="M2.800 7.500C8 7 12 3 16.800 3c2 .2 3 1.800 4 2.800 3 2.200 7 3 11 2.400-1.500 4-4 8-7.500 9.300-2 .3-3-1.500-4.500-3.200C15.500 15.500 12 20 8.300 21.600z" fill="url(#scF)"/><path d="M3.600 8.800C8.500 8 12.500 4.500 16.800 4.300M30 9.500c-2 3.500-3.700 5.800-6 6.500M8 20.300c4-2 7-6 11.500-7.300" stroke="#c9d6ff" stroke-width=".7" fill="none" opacity=".85"/></svg></div><div class="lb" style="top:15.0px"><span style="letter-spacing:-0.287px">Security and Maintenance</span></div></div>
<div class="it" style="left:517px;top:493px"><div class="ic"><svg viewBox="0 0 32 32"><defs><radialGradient id="syG" cx=".45" cy=".35" r=".75"><stop offset="0" stop-color="#5cc25a"/><stop offset=".7" stop-color="#46ad4a"/><stop offset="1" stop-color="#3a9e40"/></radialGradient><linearGradient id="syY" x1="0" y1="0" x2="1" y2="1"><stop offset="0" stop-color="#d8f09a"/><stop offset=".5" stop-color="#f6ea70"/><stop offset="1" stop-color="#ffdc55"/></linearGradient><linearGradient id="syZ" x1="1" y1="1" x2="0" y2="0"><stop offset="0" stop-color="#d8f09a"/><stop offset=".5" stop-color="#f6ea70"/><stop offset="1" stop-color="#ffdc55"/></linearGradient></defs><circle cx="16.050" cy="15.800" r="14.700" fill="url(#syG)"/><path d="M9.800 9.700c3-3.200 8.500-3.600 12 -.5 2 1.800 3 4 3 6.500h3.700l-5.300 5.500-5.300-5.500h3.500c-.1-1.500-.7-2.800-1.800-3.700-2.200-1.800-5.600-1.600-7.500.3z" fill="url(#syY)"/><path d="M22.300 22c-3 3.200-8.500 3.600-12 .5-2-1.800-3-4-3-6.500H3.600l5.300-5.500 5.300 5.500h-3.500c.1 1.500.7 2.800 1.800 3.700 2.200 1.800 5.600 1.600 7.500-.3z" fill="url(#syZ)"/></svg></div><div class="lb" style="top:15.0px"><span style="letter-spacing:-0.522px">Sync Center</span></div></div>
<div class="it" style="left:517px;top:543px"><div class="ic"><svg viewBox="0 0 32 32"><defs><linearGradient id="trW" x1="0" y1="0" x2="1" y2="0"><stop offset="0" stop-color="#ffffff"/><stop offset=".3" stop-color="#f1f1f1"/><stop offset="1" stop-color="#fafafa"/></linearGradient><linearGradient id="trL" x1="0" y1="0" x2="1" y2="1"><stop offset="0" stop-color="#dfe8ff"/><stop offset="1" stop-color="#4a70ea"/></linearGradient></defs><rect x="0.700" y="3.600" width="29" height="23.800" rx="1.500" fill="url(#trW)" stroke="#7b7e86" stroke-width="1"/><path d="M1.200 5.200h28" stroke="#c9cdd6" stroke-width="1.400"/><path d="M23 4.600h.9M25 4.600h.9M27 4.600h.9" stroke="#40589a" stroke-width="1"/><path d="M9.300 13.500l5-1v10l-5 3.500z" fill="#dcdcdc"/><path d="M11 25l5-3.500 13 1.500v3.900H11z" fill="#cfd0d2"/><path d="M15.500 7.800l13.700 1.400v14L14.200 20.500z" fill="#e4dfc8"/><path d="M16.200 8.700l13 1.300v12.500l-14.200-2.600z" fill="#1114b4"/><path d="M22 9.300l7.200.7v12.500l-5-1c.8-4 0-8.200-2.200-12.200z" fill="url(#trL)"/><rect x="7.200" y="14" width="2.100" height="12.800" rx=".6" fill="#aeb0c4"/><rect x="7.500" y="14.300" width="1.500" height="1.500" fill="#444"/><rect x="7.500" y="16.200" width="1.500" height="1.500" fill="#38e238"/></svg></div><div class="lb" style="top:15.0px"><span style="letter-spacing:-0.144px">Troubleshooting</span></div></div>
<div class="it" style="left:767px;top:143px"><div class="ic"><svg viewBox="0 0 32 32"><defs><linearGradient id="blT" x1="0" y1="0" x2="1" y2="1"><stop offset="0" stop-color="#d2d4d8"/><stop offset=".5" stop-color="#f3f4f6"/><stop offset="1" stop-color="#c3c5ca"/></linearGradient><linearGradient id="blL" x1="0" y1="0" x2="1" y2="1"><stop offset="0" stop-color="#d4ae42"/><stop offset="1" stop-color="#a87c1c"/></linearGradient></defs><path d="M0.400 8.500L14 2.500c.8-.3 1.500-.3 2.300-.1L30 5.700c1 .4 1 1 .9 2v1.500L15 16.700c-.7.300-1.300.3-2 .1L1.500 13c-.8-.3-1.100-.8-1.100-1.500z" fill="#b8babf"/><path d="M0.700 8.300L14 2.500c.8-.3 1.500-.3 2.300-.1L30 5.700c.9.400.8 1.100 0 1.500L15 13.500c-.7.300-1.300.3-2 .1L1.200 9.700c-.8-.3-1-.9-.5-1.400z" fill="url(#blT)"/><path d="M1.800 10.600l11.700 3.700v2l-11.700-3.800z" fill="#dcdaeb"/><path d="M17.800 10.500V6.800a3.300 3.800 0 0 1 6.600 0v3.700" fill="none" stroke="#b88e28" stroke-width="2.400"/><path d="M17.300 10.500V6.800" stroke="#e8cf78" stroke-width=".7"/><rect x="14" y="9.900" width="14" height="10.600" rx=".8" fill="url(#blL)"/><path d="M14.200 12.300h13.600M14.200 14.600h13.600M14.200 16.900h13.600" stroke="#e4c868" stroke-width=".5" opacity=".7"/><path d="M24.800 19.200l5.300 5.500 1.700 1.800-1.300 1.200-1.400-1.200-.7.700-1.400-1.400.7-.7-1.400-1.400-.7.700-2.200-3.500z" fill="#c9a030"/><circle cx="21" cy="18.400" r="3.500" fill="#e4e5e8" stroke="#9a9ca2" stroke-width=".7"/><circle cx="21" cy="17.300" r="1" fill="#7a5a1a"/><path d="M19.800 21.300h2.900v7.500l-1.400 1.700-1.500-1.700z" fill="#d9dadd" stroke="#8e9096" stroke-width=".5"/><path d="M21.200 22v7" stroke="#888" stroke-width=".5"/></svg></div><div class="lb" style="top:15.0px"><span style="letter-spacing:-0.350px">BitLocker Drive Encryption</span></div></div>
<div class="it" style="left:767px;top:193px"><div class="ic"><svg viewBox="0 0 32 32"><defs><linearGradient id="dpB" x1="0" y1="0" x2="1" y2="1"><stop offset="0" stop-color="#2a88e8"/><stop offset="1" stop-color="#0f6cd4"/></linearGradient></defs><rect x="2.700" y="5.700" width="26.700" height="19.500" fill="#fdfdfd" stroke="#7f8486" stroke-width="1"/><rect x="2.700" y="5.300" width="26.700" height="1.800" fill="#7f8486"/><rect x="3.300" y="7.200" width="4.400" height="17.500" fill="#ececec"/><path d="M24.200 6.200h.9M26 6.200h.9M27.700 6.200h.9" stroke="#fff" stroke-width=".8"/><path d="M4.100 10.500h2.800M4.100 13.500h2.800M4.100 16.500h2.800M4.100 19.500h2.800" stroke="#8f9496" stroke-width="1"/><rect x="9" y="9.100" width="11" height="13.800" fill="url(#dpB)"/><path d="M21.300 10.500h6.500M21.300 12.500h6.500" stroke="#8f9496" stroke-width="1"/><circle cx="23.100" cy="23.100" r="8.300" fill="#fff"/><circle cx="23.100" cy="23.100" r="7.500" fill="#149b1d" stroke="#0a7a12" stroke-width=".6"/><path d="M18.800 23l3 3 5.500-5.800" fill="none" stroke="#fff" stroke-width="1.800"/></svg></div><div class="lb" style="top:15.0px"><span style="letter-spacing:-0.225px">Default Programs</span></div></div>
<div class="it" style="left:767px;top:243px"><div class="ic"><svg viewBox="0 0 32 32"><rect x="5.400" y="2.300" width="20.300" height="27.300" fill="#fbe08a" stroke="#f0c94a" stroke-width=".9"/><path d="M8.300 2.800v26.300" stroke="#fdf0b8" stroke-width=".9"/><path d="M23.200 29.600V20l2.300-2.500 2.300 2.500v9.600z" fill="#f8d568" stroke="#eec040" stroke-width=".7"/><path d="M25.500 15.800v2" stroke="#eec040" stroke-width=".7"/><rect x="14.600" y="4.600" width="15" height="11" fill="#fdfdfd" stroke="#70777e" stroke-width="1"/><rect x="14.600" y="4.300" width="15" height="1.500" fill="#70777e"/><path d="M27 5h.7M28.300 5h.7" stroke="#fff" stroke-width=".7"/><path d="M17 8.300l1.200 1.400 2.300-2.800M17 12.300l1.200 1.400 2.300-2.800" fill="none" stroke="#2f96ea" stroke-width="1.300"/><path d="M22 8.600h5M22 12.500h5" stroke="#c3c7cb" stroke-width=".9"/></svg></div><div class="lb" style="top:15.0px"><span style="letter-spacing:-0.304px">File Explorer Options</span></div></div>
<div class="it" style="left:767px;top:293px"><div class="ic"><svg viewBox="0 0 32 32"><defs><radialGradient id="iog" cx="0.45" cy="0.38" r="0.68"><stop offset="0" stop-color="#8beaff"/><stop offset="0.3" stop-color="#35a6e4"/><stop offset="0.7" stop-color="#1d49bc"/><stop offset="1" stop-color="#182a96"/></radialGradient><clipPath id="ioc"><circle cx="12.4" cy="12.4" r="12.3"/></clipPath></defs><ellipse cx="9" cy="24.500" rx="6" ry="1.500" fill="#000" opacity=".15"/><circle cx="12.4" cy="12.4" r="12.3" fill="url(#iog)"/><g clip-path="url(#ioc)" stroke-linejoin="round"><path d="M0.10 8.71L1.95 4.40L6.25 0.71L12.40 -0.52L13.02 1.82L9.94 3.05L7.48 5.63L5.02 6.87L4.04 9.32L2.56 11.17L1.58 14.25L0.10 14.86z" fill="#2db32c" stroke="#2db32c" stroke-width=".6"/><path d="M5.63 2.81L8.71 1.33L9.69 2.81L7.23 5.02L5.02 5.02z" fill="#d8efb0" opacity=".8"/><path d="M4.90 16.09L8.10 15.84L9.32 17.94L7.85 21.62L5.88 23.47L4.40 20.40z" fill="#2aa82c" stroke="#2aa82c" stroke-width="1"/><path d="M20.52 8.71L22.86 7.23L24.95 9.94L24.95 14.86L22.86 17.32L21.01 15.48L20.03 11.79z" fill="#55c630" stroke="#55c630" stroke-width=".8"/><path d="M18.55 3.17L20.52 3.54L21.50 6.25L19.78 7.23z" fill="#3fb82e" /></g><rect x="9.800" y="12.700" width="20.600" height="17.500" rx="1.200" fill="#fbfbfc" stroke="#8a8d92" stroke-width="1"/><path d="M10.300 14.200h19.600" stroke="#d5d8de" stroke-width="1.300"/><path d="M24.300 13.700h.9M26.200 13.700h.9M28 13.700h.9" stroke="#40589a" stroke-width=".9"/><path d="M12.500 19.800l2 2.300 4-6.600M12.500 25l2 2.300 4-6.400" fill="none" stroke="#1c7cba" stroke-width="1.800"/><path d="M20 20.500h7M20 25.400h7" stroke="#5c4f80" stroke-width="1.100"/></svg></div><div class="lb" style="top:15.0px"><span style="letter-spacing:-0.115px">Internet Options</span></div></div>
<div class="it" style="left:767px;top:343px"><div class="ic"><svg viewBox="0 0 32 32"><defs><linearGradient id="pnS" x1="0" y1="0" x2="1" y2="0"><stop offset="0" stop-color="#7a7a7a"/><stop offset=".35" stop-color="#c4c4c4"/><stop offset="1" stop-color="#fff" stop-opacity="0"/></linearGradient><filter id="pnB" x="-10%" y="-30%" width="120%" height="160%"><feGaussianBlur stdDeviation=".6"/></filter></defs><path d="M4 30.600L27 21.500 26 24.500 8 30.800z" fill="url(#pnS)" filter="url(#pnB)"/><path d="M2.250 30.700L3.400 27.300C6.500 18.500 12.500 7 18.300 1c.8-.8 1.800-.8 1.900 0 .1 1.200-.3 2.300-.9 3.800C16.500 11.500 10.500 22 4.700 28.800z" fill="#1d2024"/><path d="M8.600 18.200C11 12.500 14.500 6 18.300 1.700l.7.400C16 6.500 13 12.500 10.300 18.900z" fill="#6bbde9"/><path d="M14 10l3.100-5.600.5.300L14.800 10z" fill="#f3fbff"/><path d="M6.600 21.600l2.800 1.400" stroke="#5a5a5a" stroke-width=".6"/></svg></div><div class="lb" style="top:15.0px"><span style="letter-spacing:-0.636px">Pen and Touch</span></div></div>
<div class="it" style="left:767px;top:393px"><div class="ic"><svg viewBox="0 0 32 32"><defs><linearGradient id="rcM" x1="0" y1="0" x2="1" y2="1"><stop offset="0" stop-color="#52b8fa"/><stop offset=".5" stop-color="#45b0f8"/><stop offset=".52" stop-color="#36a8f6"/><stop offset="1" stop-color="#2fa0f2"/></linearGradient><radialGradient id="rck" cx="0.4" cy="0.35" r="0.8"><stop offset="0" stop-color="#f4f5f6"/><stop offset="0.7" stop-color="#cfd3d7"/><stop offset="1" stop-color="#aeb4bb"/></radialGradient></defs><path d="M18.900 20.500l4.500-.5 4.400 2.200v1.800l-5 .8-3.900-1.800z" fill="#d4dde3"/><path d="M21.500 19l2 .7v2.500l-2-.7z" fill="#c3ccd3"/><path d="M10.100 2.800l20.500 6.300v13.800L10.100 14z" fill="#5a6a74"/><path d="M10.600 3.500l19.600 6v12.700L10.600 13.700z" fill="url(#rcM)"/><circle cx="12.1" cy="22.3" r="6.7" fill="url(#rck)" stroke="#8796a6" stroke-width="1.3"/><circle cx="12.1" cy="22.3" r="5.6" fill="none" stroke="#e9edf2" stroke-width=".7"/><path d="M16.79 22.30L17.86 22.30M16.16 24.64L17.09 25.18M14.45 26.36L14.98 27.29M12.10 26.99L12.10 28.06M9.76 26.36L9.22 27.29M8.04 24.64L7.11 25.18M7.41 22.30L6.34 22.30M8.04 19.96L7.11 19.42M9.75 18.24L9.22 17.31M12.10 17.61L12.10 16.54M14.45 18.24L14.98 17.31M16.16 19.95L17.09 19.42" stroke="#70767c" stroke-width="0.7"/><path d="M12.1 22.3L9.29 20.42M12.1 22.3L15.79 19.49" stroke="#1e2226" stroke-width="1.2" fill="none"/><path d="M11.500 14.300c-4.500.3-7.500 3.500-7.800 7l-2.500-.6 4.300 5.600 4.200-4-2.500-.5c.5-3 2.800-4.500 5.300-5z" fill="#2fb42a" stroke="#1f9a20" stroke-width=".4"/></svg></div><div class="lb" style="top:15.0px"><span style="letter-spacing:-0.572px">Recovery</span></div></div>
<div class="it" style="left:767px;top:443px"><div class="ic"><svg viewBox="0 0 32 32"><defs><linearGradient id="sdK" x1="0" y1="0" x2="1" y2="0"><stop offset="0" stop-color="#2e2e2e"/><stop offset=".6" stop-color="#5a5a5a"/><stop offset="1" stop-color="#444"/></linearGradient><linearGradient id="sdC" x1="0" y1="0" x2="0.400" y2="1"><stop offset="0" stop-color="#b4b9be"/><stop offset=".45" stop-color="#a3acb3"/><stop offset="1" stop-color="#c9dde8"/></linearGradient><radialGradient id="sdD" cx=".45" cy=".4" r=".7"><stop offset="0" stop-color="#e6f6ff"/><stop offset="1" stop-color="#8fa9b8"/></radialGradient></defs><path d="M18.500 5c4-1 7 1 8.500 5 1.500 4.500 1 8.500-2 11l-4.500 3z" fill="url(#sdK)"/><ellipse cx="14.600" cy="16.300" rx="9.700" ry="14" fill="#d9d9d9" stroke="#4c4c4c" stroke-width="1" transform="rotate(-22 14.600 16.300)"/><ellipse cx="13.900" cy="16" rx="9.700" ry="14.100" fill="#f2f2f2" stroke="#6a6a6a" stroke-width=".6" transform="rotate(-22 13.900 16)"/><ellipse cx="13.200" cy="15.800" rx="9.700" ry="14.200" fill="#fdfdfd" stroke="#c4c6c8" stroke-width=".5" transform="rotate(-22 13.200 15.800)"/><ellipse cx="13.400" cy="15.800" rx="9.200" ry="13.600" fill="none" stroke="#bfc1c3" stroke-width=".7" transform="rotate(-22 13.400 15.800)"/><ellipse cx="12.900" cy="16" rx="7" ry="11" fill="url(#sdC)" transform="rotate(-22 12.900 16)"/><ellipse cx="15.600" cy="14.800" rx="2.600" ry="3.600" fill="url(#sdD)" transform="rotate(-22 15.600 14.800)"/></svg></div><div class="lb" style="top:15.0px"><span style="letter-spacing:-0.453px">Sound</span></div></div>
<div class="it" style="left:767px;top:493px"><div class="ic"><svg viewBox="0 0 32 32"><defs><linearGradient id="syM" x1="0" y1="0" x2="1" y2="1"><stop offset="0" stop-color="#52b8fa"/><stop offset=".5" stop-color="#45b0f8"/><stop offset=".52" stop-color="#36a8f6"/><stop offset="1" stop-color="#2fa0f2"/></linearGradient></defs><path d="M15.300 21.500l6-1.500 6.500 2.200v1.500l-5.500 1-7-2z" fill="#d4dde3"/><path d="M21.500 19l2 .7v2.500l-2-.7z" fill="#c3ccd3"/><path d="M10.100 2.800l20.500 6.300v13.800L10.100 14z" fill="#5a6a74"/><path d="M10.600 3.500l19.600 6v12.700L10.600 13.700z" fill="url(#syM)"/><path d="M17.300 12l2.600 3.500 4.700-3.800" fill="none" stroke="#fff" stroke-width="1.400"/><path d="M0.700 24.200L8 21.800l16.400 5.500-7.600 2.300z" fill="#cdd6dd"/><path d="M0.700 24.200l16.100 5.400 7.600-2.300" fill="none" stroke="#b3bdc6" stroke-width=".7"/><path d="M3.100 23.400l16.200 5.400M5.600 22.600l16.200 5.400M5 25.600l5.500-1.900M9 26.900l5.500-1.900M13 28.200l5.500-1.900" stroke="#eaeff3" stroke-width=".5"/></svg></div><div class="lb" style="top:15.0px"><span style="letter-spacing:-0.591px">System</span></div></div>
<div class="it" style="left:767px;top:543px"><div class="ic"><svg viewBox="0 0 32 32"><defs><linearGradient id="usG" x1="0" y1="0" x2="1" y2="1"><stop offset="0" stop-color="#a2cf7c"/><stop offset="1" stop-color="#5f9e3e"/></linearGradient><linearGradient id="usB" x1="0" y1="0" x2="1" y2="1"><stop offset="0" stop-color="#a9cbee"/><stop offset="1" stop-color="#6a9cd4"/></linearGradient><radialGradient id="usS" cx=".4" cy=".35" r=".8"><stop offset="0" stop-color="#fbe0c0"/><stop offset="1" stop-color="#d9a77a"/></radialGradient><radialGradient id="usM" cx=".35" cy=".4" r=".8"><stop offset="0" stop-color="#e0aa78"/><stop offset="1" stop-color="#a8703c"/></radialGradient></defs><path d="M0.900 22c0-4.500 3-7.500 8.400-7.700 4.500 0 7 2.500 7 6.500v2.700c-5 1-11 1-15.400-.5z" fill="url(#usG)"/><path d="M7.500 15l1.800 8 1.500-8z" fill="#e4efe4"/><path d="M4.500 11.500C3.800 6.500 6 2.500 9.800 2.300c2.500 0 4.500 1 5.200 2.500l-1.500 1c.5 3 .3 5-1 7.500z" fill="#d9c06a"/><ellipse cx="9.600" cy="9.800" rx="3.600" ry="4.600" fill="url(#usS)"/><path d="M5.800 8c.5-3 3-4.500 7.500-3.200l1-1.300C12.500 2 7 1.500 5 5.500c-.8 2-.3 5 .5 7z" fill="#d6bc62"/><path d="M13.400 26c0-5 3-8 8.500-8.200 5.500.2 8.500 3 8.500 8v2c-5 2-12 2-17 0z" fill="url(#usB)"/><path d="M17 19l4.300 2.500 1-.2 2-3.500-2.500-1.500z" fill="#b06a2a"/><path d="M18 21.500l-.5 7 2.500.5 1-7.500z" fill="#f3f6fa"/><ellipse cx="18.900" cy="12.900" rx="4.700" ry="5.700" fill="url(#usM)"/><path d="M14.300 10.500c.2-3.500 3-5.800 6.800-5.500 3 .3 5 2.500 4.700 6-.1 1.500-.6 3-1.500 4-.3-2-1-4-2-5.300-2.300-1-5.500-.6-8 .8z" fill="#5c5e60"/></svg></div><div class="lb" style="top:15.0px"><span style="letter-spacing:-0.381px">User Accounts</span></div></div>
<!-- dropdown menu -->
<div class="abs" style="left:855px;top:102px;width:148px;height:77px;background:#f2f2f2;border:1px solid #cfcfcf;box-shadow:3px 3px 3px rgba(0,0,0,.45)"></div>
<div class="abs" style="left:886px;top:130px;width:116px;height:1px;background:#d8d8d8"></div>
<div class="abs" style="left:858px;top:134px;width:22px;height:22px;background:#91c9f7"></div>
<div class="abs" style="left:865.500px;top:142px;width:6px;height:6px;border-radius:50%;background:#222"></div>
<div class="t" style="left:890.3px;top:109.34px;font-size:12px;line-height:15px;letter-spacing:-0.188px;color:#000;">Category</div>
<div class="t" style="left:890.3px;top:138.34px;font-size:12px;line-height:15px;letter-spacing:-0.232px;color:#000;">Large icons</div>
<div class="t" style="left:890.3px;top:160.09px;font-size:12px;line-height:15px;letter-spacing:-0.169px;color:#000;">Small icons</div>
<!-- taskbar -->
<div class="abs" style="left:0;top:728px;width:1024px;height:40px;background:#1f2e36"></div>
<div class="abs" style="left:407px;top:728px;width:160px;height:40px;background:#4b5a61"></div>
<div class="abs" style="left:151.500px;top:765.500px;width:152px;height:2.500px;background:#76b9ed"></div>
<div class="abs" style="left:407px;top:765.500px;width:160px;height:2.500px;background:#76b9ed"></div>
<div class="abs" style="left:0;top:728px;width:1024px;height:40px"><svg width="1024" height="40" viewBox="0 0 1024 40"><defs><linearGradient id="edA" x1="0.200" y1="0" x2="0.600" y2="1"><stop offset="0" stop-color="#2fb4ee"/><stop offset=".5" stop-color="#1787dc"/><stop offset="1" stop-color="#0c6ac4"/></linearGradient><linearGradient id="edB" x1="0" y1="0" x2="1" y2="0.250"><stop offset="0" stop-color="#35b4f2"/><stop offset=".5" stop-color="#2cc4d0"/><stop offset=".8" stop-color="#55dc80"/><stop offset="1" stop-color="#74e44a"/></linearGradient><linearGradient id="edC" x1="0" y1="0" x2="1" y2="1"><stop offset="0" stop-color="#1565b6"/><stop offset="1" stop-color="#0f4c9a"/></linearGradient><linearGradient id="stB" x1="0" y1="0" x2="0" y2="1"><stop offset="0" stop-color="#ffffff"/><stop offset="1" stop-color="#e8e8ea"/></linearGradient></defs><path d="M15.500 13.700L21.700 12.800V19.200H15.500zM22.600 12.650L32.700 11.200V19.200H22.600zM15.500 20.100H21.700V26.900L15.500 26zM22.600 20.100H32.700V28.500L22.600 27z" fill="#fff"/><circle cx="74" cy="17.800" r="8.100" fill="none" stroke="#fff" stroke-width="2.300"/><path d="M68.200 24.100L61.800 30.200" stroke="#fff" stroke-width="2.400"/><circle cx="123.050" cy="19.850" r="12.100" fill="url(#edA)"/><path d="M117.96 21.80C117.77 18.28 120.11 16.72 122.06 17.89L120.70 20.62L121.28 23.36L123.62 25.70L127.53 27.07L131.44 26.88L133.47 25.90C132.22 28.83 129.88 30.78 126.75 31.88C125.19 32.23 123.62 32.23 122.45 31.95C119.72 30.00 118.08 26.09 117.96 21.80z" fill="url(#edC)"/><path d="M120.89 18.48C122.45 17.50 124.41 17.89 125.11 19.45C125.58 21.02 125.19 22.19 124.21 22.77C125.19 23.75 127.53 24.41 129.88 24.22C131.44 24.14 133.00 23.67 134.25 22.50L135.34 23.36L135.34 25.31C134.56 25.31 133.98 25.62 133.39 26.02C131.44 26.95 127.53 27.19 123.62 25.70C121.28 23.36 120.50 20.62 120.89 18.48z" fill="#1f2e36"/><path d="M111.12 17.89C111.12 12.81 115.81 7.73 123.04 7.73C129.88 7.73 135.15 12.81 135.15 18.28C135.15 21.80 133.00 23.75 129.88 24.14C127.53 24.34 125.19 23.75 124.21 22.77C125.58 21.41 125.58 18.67 124.41 16.72C122.84 14.38 118.94 13.79 115.81 14.57C113.47 15.16 111.91 16.33 111.12 17.89z" fill="url(#edB)"/><path d="M163.500 11.200H173.400V21.500h1.500V27.500H163.500z" fill="#f3d06c"/><path d="M161.600 11h2.300l1.700 2.200V30.700l-4-2.300z" fill="#fbe7a3"/><path d="M327 13.500V11.200c0-1 .7-1.700 1.700-1.700h7.800c1 0 1.700.7 1.700 1.700v2.300" fill="none" stroke="#2aa6ee" stroke-width="1.600"/><path d="M320.800 13.200H344V28.300c0 2.200-1.700 3.800-3.800 3.800H324.600c-2.100 0-3.800-1.600-3.800-3.800z" fill="url(#stB)"/><rect x="328" y="18" width="4.100" height="4" fill="#f25022"/><rect x="333.200" y="18" width="4.100" height="4" fill="#7fba00"/><rect x="328" y="23" width="4.100" height="4" fill="#1ea2ef"/><rect x="333.200" y="23" width="4.100" height="4" fill="#ffb900"/><path d="M369.700 16.400L382 9.800l12.300 6.600V29H369.700z" fill="#fff"/><path d="M371.600 16.200h20.600l-6.900 4.600 4.100 4.700-9.400-5.400z" fill="#1f2e36"/><path d="M785.200 23l5.900-6.500 5.900 6.500" fill="none" stroke="#fff" stroke-width="1.300"/><path d="M815.200 17.700h2.600l2.900-3v11.200l-2.900-3h-2.600z" fill="none" stroke="#fff" stroke-width="1.100" stroke-linejoin="round"/><path d="M822.800 17.800a3.500 3.500 0 0 1 0 5M825 15.800a6.300 6.300 0 0 1 0 9M827.300 13.900a9 9 0 0 1 0 12.800" fill="none" stroke="#fff" stroke-width="1.100"/><circle cx="854.700" cy="19.800" r="7" fill="none" stroke="#fff" stroke-width="1.100"/><ellipse cx="854.700" cy="19.800" rx="3" ry="7" fill="none" stroke="#fff" stroke-width="1"/><path d="M848 17.300h13.400M848 22.300h13.400" stroke="#fff" stroke-width="1"/><circle cx="859.600" cy="24.600" r="4.300" fill="#1f2e36"/><circle cx="859.600" cy="24.600" r="3.100" fill="none" stroke="#fff" stroke-width="1.100"/><path d="M857.500 22.500l4.200 4.200" stroke="#fff" stroke-width="1.100"/><path d="M983.900 12.700h14.600v11.500h-4.700l-2.700 2.800-2.700-2.800h-4.500z" fill="none" stroke="#fff" stroke-width="1.200"/></svg></div>
<div class="abs" style="left:419px;top:741px;width:20.500px;height:14px"><svg width="21" height="14" viewBox="0 0 16 12" preserveAspectRatio="none"><rect x="0.500" y="0.500" width="15" height="11" fill="#a8dcfc" stroke="#3aa0ea" stroke-width="1"/><rect x="9" y="2" width="5" height="5" fill="#6cc0f5"/><circle cx="5" cy="5" r="2.900" fill="#f4fbff"/><circle cx="5" cy="5" r="2.100" fill="#1a84de"/><path d="M5 5V1.900A3.100 3.100 0 0 1 8.100 5z" fill="#ffb41a"/><rect x="10" y="3.100" width="2.500" height=".9" rx=".4" fill="#fff"/><circle cx="12.500" cy="3.550" r=".65" fill="#f5901e"/><circle cx="10.400" cy="5.600" r=".6" fill="#1a78d0"/><rect x="11" y="5.150" width="2.400" height=".9" rx=".4" fill="#fff"/><rect x="2" y="9.100" width="4.800" height=".95" fill="#f59a1a"/><rect x="6.800" y="9.100" width="2.200" height=".95" fill="#fff"/><rect x="9" y="9.100" width="4.800" height=".95" fill="#0f6ed0"/></svg></div>
<div class="t" style="left:185.8px;top:741.09px;font-size:12px;line-height:15px;letter-spacing:0.180px;color:#fff;">Work</div>
<div class="t" style="left:445.3px;top:741.09px;font-size:12px;line-height:15px;letter-spacing:-0.095px;color:#fff;">All Control Panel It...</div>
<div class="t" style="left:877.5px;top:741.09px;font-size:12px;line-height:15px;letter-spacing:-1.239px;color:#fff;">ENG</div>
<div class="t" style="left:928.8px;top:732.34px;font-size:12px;line-height:15px;letter-spacing:-0.915px;color:#fff;">1:32</div>
<div class="t" style="left:913.0px;top:750.34px;font-size:12px;line-height:15px;letter-spacing:-0.155px;color:#fff;">28/9/2568</div>
<div class="abs" style="left:1019px;top:728px;width:1px;height:40px;background:#7f8a8f"></div>
</body></html>
